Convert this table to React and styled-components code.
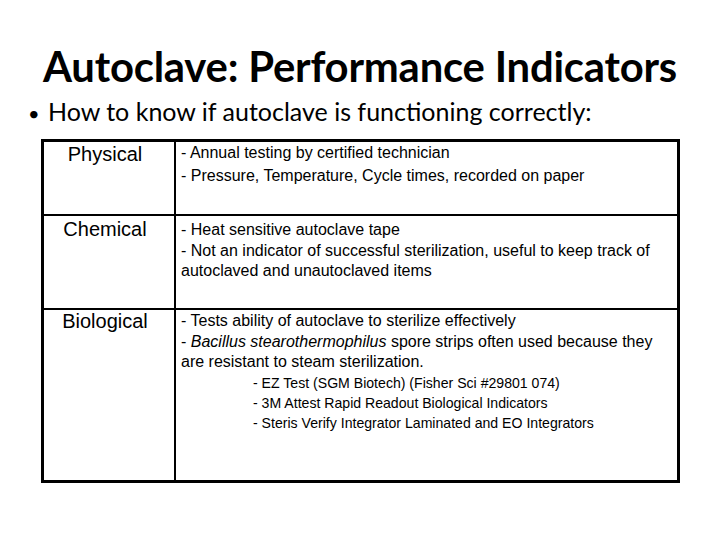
import React from "react";
import styled, { createGlobalStyle } from "styled-components";

const Global = createGlobalStyle`
  html, body { margin: 0; padding: 0; background: #fff; }
  body { width: 720px; height: 540px; overflow: hidden; }
`;

const Slide = styled.div`
  width: 720px;
  height: 540px;
  box-sizing: border-box;
  padding-top: 42px;
  display: flex;
  flex-direction: column;
  background: #fff;
  color: #000;
`;

const Title = styled.h1`
  margin: 0;
  text-align: center;
  font-family: "Lato", "Open Sans", sans-serif;
  font-weight: 700;
  font-size: 41.8px;
  line-height: 48px;
  letter-spacing: -0.2px;
`;

const Bullet = styled.div`
  display: flex;
  align-items: baseline;
  margin: 6px 0 0 28px;
  font-family: "Lato", "Open Sans", sans-serif;
  font-size: 25px;
  line-height: 30px;
`;

const Dot = styled.span`
  width: 20px;
  flex: none;
  font-size: 20px;
`;

const Table = styled.div`
  margin: 11px 0 0 41px;
  width: 639px;
  box-sizing: border-box;
  border: 3px solid #000;
  display: grid;
  grid-template-columns: 132px 1fr;
  grid-template-rows: 72px 94px 172px;
  font-family: "Liberation Sans", Arial, sans-serif;
`;

const Label = styled.div`
  border-right: 2px solid #000;
  border-top: ${(p) => (p.$first ? "none" : "2px solid #000")};
  text-align: center;
  padding: ${(p) => p.$pad}px 8px 0 0;
  font-size: 20px;
  line-height: 22px;
`;

const Cell = styled.div`
  border-top: ${(p) => (p.$first ? "none" : "2px solid #000")};
  padding: ${(p) => p.$pad}px 4px 0 5px;
  font-size: 16px;
  line-height: 20px;
`;

const Para = styled.p`
  margin: ${(p) => (p.$gap ? `${p.$gap}px` : "0")} 0 0 0;
  padding-left: ${(p) => (p.$indent ? "72px" : "0")};
  font-size: ${(p) => (p.$small ? "14.1px" : "inherit")};
`;

export default function App() {
  return (
    <>
      <Global />
      <Slide>
        <Title>Autoclave: Performance Indicators</Title>
        <Bullet>
          <Dot>•</Dot>
          <span>How to know if autoclave is functioning correctly:</span>
        </Bullet>
        <Table>
          <Label $first $pad={1}>Physical</Label>
          <Cell $first $pad={1}>
            <Para>- Annual testing by certified technician</Para>
            <Para $gap={3}>- Pressure, Temperature, Cycle times, recorded on paper</Para>
          </Cell>
          <Label $pad={2}>Chemical</Label>
          <Cell $pad={4}>
            <Para>- Heat sensitive autoclave tape</Para>
            <Para $gap={1}>
              - Not an indicator of successful sterilization, useful to keep track of autoclaved and unautoclaved items
            </Para>
          </Cell>
          <Label $pad={0}>Biological</Label>
          <Cell $pad={1}>
            <Para>- Tests ability of autoclave to sterilize effectively</Para>
            <Para $gap={1}>
              - <i>Bacillus stearothermophilus</i> spore strips often used because they are resistant to steam sterilization.
            </Para>
            <Para $indent $small $gap={1}>- EZ Test (SGM Biotech) (Fisher Sci #29801 074)</Para>
            <Para $indent $small>- 3M Attest Rapid Readout Biological Indicators</Para>
            <Para $indent $small>- Steris Verify Integrator Laminated and EO Integrators</Para>
          </Cell>
        </Table>
      </Slide>
    </>
  );
}
